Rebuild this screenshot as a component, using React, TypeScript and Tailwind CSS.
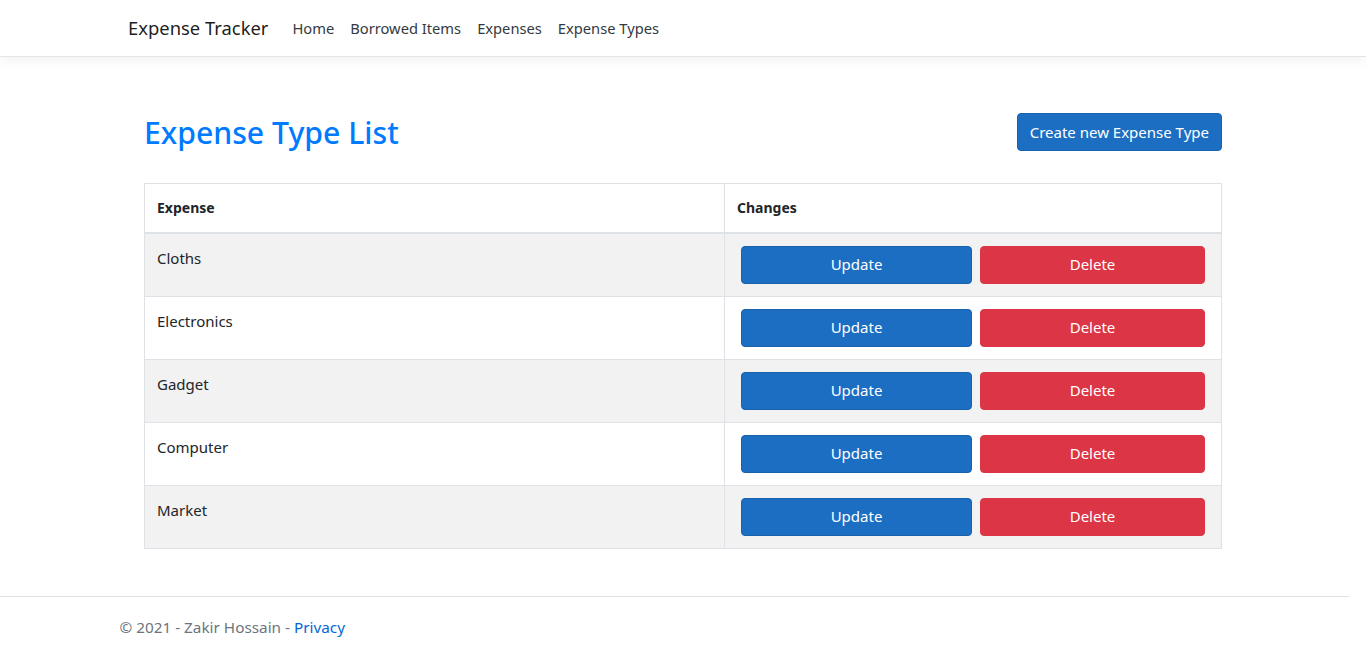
import React from "react";

const expenseTypes = ["Cloths", "Electronics", "Gadget", "Computer", "Market"];

const navLinks = ["Home", "Borrowed Items", "Expenses", "Expense Types"];

export default function App() {
  return (
    <div className="min-h-[657px] flex flex-col bg-white text-[15px] text-[#212529] font-['Noto_Sans',sans-serif]">
      <header className="h-[57px] border-b border-[#e5e5e5] shadow-[0_4px_12px_rgba(0,0,0,0.05)] bg-white">
        <nav className="w-[1110px] mx-auto h-full flex items-center">
          <a className="text-[18.4px] text-[rgba(0,0,0,0.9)] mr-6">Expense Tracker</a>
          <ul className="flex items-center">
            {navLinks.map((l) => (
              <li key={l} className="px-2 first:pl-0 text-[14.7px] text-[#343a40]">
                {l}
              </li>
            ))}
          </ul>
        </nav>
      </header>

      <main className="w-[1110px] mx-auto px-4 pt-[55px] pb-[47px]">
        <div className="flex items-center justify-between">
          <h1 className="text-[30.2px] font-medium text-[#007bff] leading-[38px] pt-[2px]">Expense Type List</h1>
          <button
            type="button"
            className="h-[38px] px-3 rounded-[4px] bg-[#1b6ec2] border border-[#1861ac] text-white text-[15px]"
          >
            Create new Expense Type
          </button>
        </div>

        <table className="w-full mt-[31px] border-collapse border border-[#dee2e6]">
          <thead>
            <tr className="border-b-2 border-[#dee2e6]">
              <th className="w-[580px] h-[49px] px-3 text-left font-bold text-[14px] border border-[#dee2e6]">Expense</th>
              <th className="px-3 text-left font-bold text-[14px] border border-[#dee2e6]">Changes</th>
            </tr>
          </thead>
          <tbody>
            {expenseTypes.map((name, i) => (
              <tr key={name} className={i % 2 === 0 ? "bg-[#f2f2f2]" : "bg-white"}>
                <td className="px-3 py-3 align-top border border-[#dee2e6] leading-6">{name}</td>
                <td className="px-3 py-3 border border-[#dee2e6]">
                  <div className="flex gap-2 px-1">
                    <button
                      type="button"
                      className="w-[231px] h-[38px] rounded-[4px] bg-[#1b6ec2] border border-[#1861ac] text-white"
                    >
                      Update
                    </button>
                    <button
                      type="button"
                      className="w-[225px] h-[38px] rounded-[4px] bg-[#dc3545] border border-[#dc3545] text-white"
                    >
                      Delete
                    </button>
                  </div>
                </td>
              </tr>
            ))}
          </tbody>
        </table>
      </main>

      <footer className="w-[1349px] border-t border-[#dee2e6] h-[60px] leading-[60px] text-[15.3px] text-[#6c757d]">
        <div className="w-[1110px] mx-auto">
          <span>© 2021 - Zakir Hossain - </span>
          <a className="text-[#0366d6]">Privacy</a>
        </div>
      </footer>
    </div>
  );
}
